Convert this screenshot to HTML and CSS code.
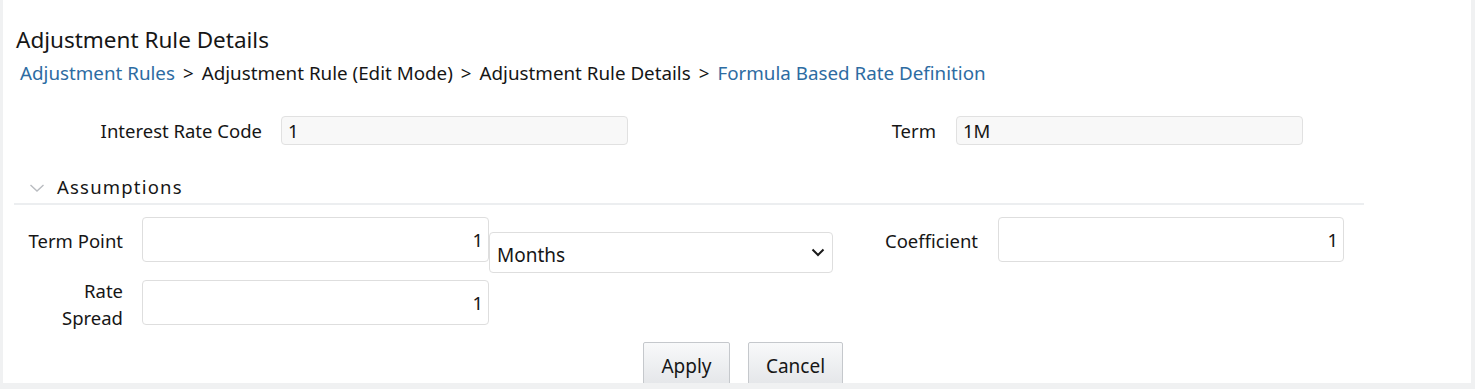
FILE: index.html
```html
<!DOCTYPE html>
<html>
<head>
<meta charset="utf-8">
<link rel="stylesheet" href="styles.css">
</head>
<body>
<div class="panel">
  <h1 class="title">Adjustment Rule Details</h1>
  <div class="crumbs">
    <a class="link">Adjustment Rules</a><span class="sep">&gt;</span><span>Adjustment Rule (Edit Mode)</span><span class="sep">&gt;</span><span>Adjustment Rule Details</span><span class="sep">&gt;</span><a class="link">Formula Based Rate Definition</a>
  </div>

  <div class="row1">
    <label class="lbl lbl-irc">Interest Rate Code</label>
    <div class="ro">1</div>
    <label class="lbl lbl-term">Term</label>
    <div class="ro">1M</div>
  </div>

  <div class="section">
    <svg class="chev" width="16" height="10" viewBox="0 0 16 10"><polyline points="1.5,2 8,8 14.5,2" fill="none" stroke="#b9bcc0" stroke-width="1.4"/></svg>
    <span class="section-title">Assumptions</span>
  </div>

  <div class="row2">
    <label class="lbl lbl-c1">Term Point</label>
    <div class="num">1</div>
    <div class="select">
      <span>Months</span>
      <svg width="14" height="9" viewBox="0 0 14 9"><polyline points="1.5,1.5 7,7 12.5,1.5" fill="none" stroke="#1a1a1a" stroke-width="2"/></svg>
    </div>
    <label class="lbl lbl-coef">Coefficient</label>
    <div class="num num-coef">1</div>
  </div>

  <div class="row3">
    <label class="lbl lbl-c1 lbl-wrap">Rate Spread</label>
    <div class="num">1</div>
  </div>

  <div class="buttons">
    <button class="btn">Apply</button>
    <button class="btn btn-cancel">Cancel</button>
  </div>
</div>
</body>
</html>
```
FILE: styles.css
```css
html, body {
  margin: 0;
  padding: 0;
  background: #f0f1f2;
}
body {
  font-family: "Noto Sans", "Open Sans", sans-serif;
  color: #161616;
  width: 1475px;
  height: 389px;
  overflow: hidden;
}
.panel {
  margin-left: 3px;
  width: 1468px;
  height: 383px;
  background: #ffffff;
  overflow: hidden;
}
.title {
  margin: 0;
  padding: 25px 0 0 13px;
  font-size: 22.5px;
  font-weight: 400;
  line-height: 30px;
  color: #161616;
}
.crumbs {
  margin-top: 6px;
  padding-left: 17px;
  font-size: 18.8px;
  line-height: 24px;
  color: #161616;
}
.link { color: #2d6ca2; }
.sep { margin: 0 8px; }
.lbl {
  font-size: 18.5px;
  color: #161616;
  text-align: right;
}
.row1 {
  display: flex;
  align-items: center;
  margin-top: 31px;
}
.lbl-irc { width: 259px; margin-right: 19px; }
.lbl-term { width: 308px; margin-right: 20px; }
.ro {
  box-sizing: border-box;
  width: 347px;
  height: 29px;
  background: #f8f8f8;
  border: 1px solid #e1e1e1;
  border-radius: 4px;
  font-size: 18.5px;
  line-height: 27px;
  padding-left: 6px;
}
.section {
  display: flex;
  align-items: center;
  margin: 25px 0 0 11px;
  width: 1350px;
  height: 33px;
  border-bottom: 2px solid #eceef0;
}
.chev { margin: 2px 12px 0 15px; }
.section-title {
  font-size: 18.5px;
  letter-spacing: 1.2px;
  color: #161616;
}
.row2 {
  display: flex;
  align-items: flex-start;
  margin-top: 12px;
}
.row3 {
  display: flex;
  align-items: flex-start;
  margin-top: 7px;
  height: 45px;
}
.lbl-c1 {
  width: 97px;
  margin-left: 23px;
  margin-right: 19px;
  line-height: 27px;
  padding-top: 10px;
}
.lbl-wrap { padding-top: 0; margin-top: -3px; }
.num {
  box-sizing: border-box;
  width: 347px;
  height: 45px;
  background: #fff;
  border: 1px solid #dedede;
  border-radius: 4px;
  font-size: 18.5px;
  line-height: 43px;
  text-align: right;
  padding-right: 5px;
}
.num-coef { width: 346px; }
.select {
  box-sizing: border-box;
  width: 344px;
  height: 41px;
  margin-top: 15px;
  border: 1px solid #dedede;
  border-radius: 4px;
  display: flex;
  align-items: center;
  justify-content: space-between;
  padding: 4px 7px 0 7px;
  font-size: 19px;
}
.select svg { margin-top: -4px; }
.lbl-coef {
  width: 145px;
  margin-right: 20px;
  line-height: 27px;
  padding-top: 10px;
}
.buttons {
  display: flex;
  justify-content: center;
  gap: 18px;
  margin-top: 17px;
  padding-left: 12px;
}
.btn {
  box-sizing: border-box;
  height: 44px;
  width: 87px;
  padding: 4px 0 0;
  font-family: "Noto Sans", "Open Sans", sans-serif;
  font-size: 19px;
  color: #161616;
  background: linear-gradient(#f8f9fa, #e4e6e9);
  border: 1px solid #c5c8cc;
  border-radius: 2px;
}
.btn-cancel { width: 95px; }
```
